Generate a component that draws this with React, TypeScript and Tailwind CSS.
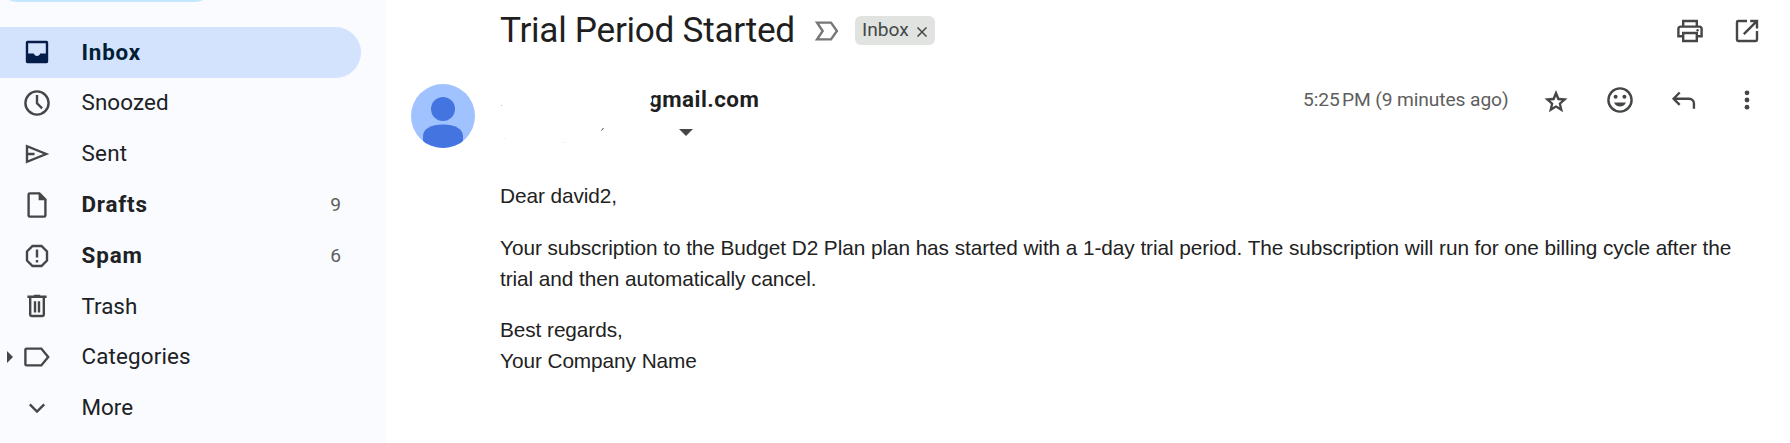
import React from "react";

type IconProps = { children: React.ReactNode; className?: string };

function Icon({ children, className = "text-[#444746]" }: IconProps) {
  return (
    <svg viewBox="0 0 20 20" fill="none" stroke="currentColor" strokeWidth="1.5" className={`block size-8 shrink-0 ${className}`}>
      {children}
    </svg>
  );
}

const icons: Record<string, React.ReactNode> = {
  Inbox: (
    <path
      fill="currentColor"
      stroke="none"
      fillRule="evenodd"
      d="M4 3h12a1 1 0 0 1 1 1v12a1 1 0 0 1-1 1H4a1 1 0 0 1-1-1V4a1 1 0 0 1 1-1zM4.500 4.500V11H8c.3.900 1 1.500 2 1.500s1.700-.600 2-1.500h3.500V4.500z"
    />
  ),
  Snoozed: (
    <>
      <circle cx="10" cy="10" r="7.250" />
      <path d="M10 5v5.200l3.200 3.200" />
    </>
  ),
  Sent: <path d="M3.750 5.150v9.700L15.700 10zM3.750 10H8.500" />,
  Drafts: (
    <>
      <path d="M5.500 2.750h6L15.250 6.500v10a.75.75 0 0 1-.75.75h-9a.75.75 0 0 1-.75-.75v-13a.75.75 0 0 1 .75-.75z" />
      <path d="M11 2v5h5z" fill="currentColor" stroke="none" />
    </>
  ),
  Spam: (
    <>
      <path d="M7.200 3.750h5.600l3.450 3.450v5.600l-3.450 3.450H7.200L3.750 12.800V7.200z" />
      <path d="M10 6v5M10 12.500V14" />
    </>
  ),
  Trash: (
    <path d="M4 4.250h12M8 3.750h4M5.750 4.500v11a.75.75 0 0 0 .75.75h7a.75.75 0 0 0 .75-.75v-11M8.750 7v7M11.250 7v7" />
  ),
  Categories: <path d="M3.500 4.750h9.200L17 10l-4.300 5.250H3.500a.75.75 0 0 1-.75-.75v-9a.75.75 0 0 1 .75-.75z" />,
  More: <path d="M5.500 7.750 10 12.200l4.500-4.450" />,
};

type Item = { name: string; count?: number; strong?: boolean; tracking: string };

const items: Item[] = [
  { name: "Inbox", strong: true, tracking: "tracking-[0.8px]" },
  { name: "Snoozed", tracking: "tracking-[0.1px]" },
  { name: "Sent", tracking: "tracking-[0.25px]" },
  { name: "Drafts", count: 9, strong: true, tracking: "tracking-[0.8px]" },
  { name: "Spam", count: 6, strong: true, tracking: "tracking-[0.9px]" },
  { name: "Trash", tracking: "tracking-normal" },
  { name: "Categories", tracking: "tracking-[0.15px]" },
  { name: "More", tracking: "tracking-normal" },
];

function Sidebar() {
  return (
    <aside className="flex w-[386px] shrink-0 flex-col overflow-hidden bg-[#f9fbff]">
      <div className="-ml-[7px] h-[2px] w-[226px] shrink-0 overflow-hidden">
        <div className="-mt-[88px] h-[90px] rounded-[25px] bg-[#c2e7ff]" />
      </div>
      <nav className="mt-[25px] flex flex-col">
        {items.map((item) => {
          const active = item.name === "Inbox";
          return (
            <a
              key={item.name}
              className={`flex h-[50.800px] w-[361px] shrink-0 items-center pr-[20px] ${active ? "rounded-r-full bg-[#d3e3fd] text-[#001d35]" : "text-[#202124]"}`}
            >
              <span className="flex w-[21px] justify-center">
                {item.name === "Categories" && (
                  <svg viewBox="0 0 6 12" className="ml-[-1px] h-3 w-1.5 fill-[#444746]">
                    <path d="M0 0v12l6-6z" />
                  </svg>
                )}
              </span>
              <Icon className={active ? "text-[#041e49]" : "text-[#444746]"}>{icons[item.name]}</Icon>
              <span className={`ml-[28.500px] flex-1 pb-px text-[22.400px] leading-none ${item.strong ? "font-bold" : ""} ${item.tracking}`}>{item.name}</span>
              {item.count && <span className="text-[19.200px] leading-none text-[#5e5e5e]">{item.count}</span>}
            </a>
          );
        })}
      </nav>
    </aside>
  );
}

function Header() {
  return (
    <div className="flex h-[61px] items-center">
      <h1 className="w-[311px] pt-px text-[35.200px] leading-none tracking-[-0.29px] whitespace-nowrap text-[#1f1f1f]">Trial Period Started</h1>
      <Icon className="text-[#747775]">
        <path d="M3.800 4.750h8.700L16.200 10l-3.700 5.250H3.800L7.300 10z" />
      </Icon>
      <span className="ml-3 flex h-[29px] w-20 items-center rounded-md bg-[#e1e3e1] pl-[7px] text-[19.200px] leading-none text-[#444746]">
        <span className="w-[55px] pb-0.5">Inbox</span>
        <svg viewBox="0 0 10 10" className="mt-[3px] size-2.5 stroke-[#444746]" fill="none" strokeWidth="1.500">
          <path d="m.5.5 9 9M9.500.5l-9 9" />
        </svg>
      </span>
      <div className="ml-auto flex gap-[25px]">
        <Icon>
          <path d="M5.750 7V3.750h8.500V7M5.500 13.250H2.750v-4.500c0-.8.700-1.500 1.500-1.500h11.500c.8 0 1.500.7 1.500 1.500v4.500H14.500M5.750 11.250h8.500v5h-8.500z" />
          <circle cx="14.750" cy="9.500" r=".75" fill="currentColor" stroke="none" />
        </Icon>
        <Icon>
          <path d="M10 3.750H4.500a.75.75 0 0 0-.75.75v11c0 .4.350.75.75.75h11c.4 0 .75-.350.75-.75V10M12 3.750h4.250V8.500M16 4l-8 8" />
        </Icon>
      </div>
    </div>
  );
}

function Sender() {
  return (
    <div className="flex h-[87px] items-start pt-[23px]">
      <svg viewBox="0 0 64 64" className="size-16 shrink-0">
        <clipPath id="avatar">
          <circle cx="32" cy="32" r="32" />
        </clipPath>
        <g clipPath="url(#avatar)">
          <path fill="#a0c2ff" d="M0 0h64v64H0z" />
          <circle cx="32" cy="25" r="12" fill="#4374e0" />
          <path fill="#4374e0" d="M12 64V52c0-7 8-11.500 20-11.500S52 45 52 52v12z" />
        </g>
      </svg>
      <svg viewBox="0 0 174 64" className="h-16 w-[174px] shrink-0" fill="none">
        <path d="m126.500 46.500 2-2.500" stroke="#444746" strokeWidth="1" />
        <path d="M26 21.500h1" stroke="#bbbbbb" />
        <path d="M29 54.500h1.500M88 58.500h2.500" stroke="#efefef" />
      </svg>
      <div className="flex flex-col">
        <span className="relative -mt-px text-[22.400px] leading-8 font-bold tracking-[0.45px] text-[#1f1f1f]">
          gmail.com
          <span className="absolute top-[13px] -left-px h-2 w-[4px] rounded-r-full bg-white" />
        </span>
        <svg viewBox="0 0 14 7" className="mt-3.5 ml-[29.500px] h-[7px] w-3.5 fill-[#444746]">
          <path d="M0 0h14L7 7z" />
        </svg>
      </div>
      <div className="ml-auto flex h-8 items-center">
        <span className="mr-[31.500px] text-[19.200px] tracking-[-0.100px] whitespace-nowrap text-[#5e5e5e]">{"5:25\u202fPM (9 minutes ago)"}</span>
        <div className="flex">
          <Icon className="mr-8 text-[#444746]">
            <path
              fill="currentColor"
              stroke="none"
              fillRule="evenodd"
              d="M7.790 14.600 10 13.250l2.210 1.350-.58-2.520 1.940-1.690-2.560-.23L10 7.800 8.990 10.160l-2.560.23 1.940 1.690zM5.600 17.600l1.200-5.100-4-3.500 5.200-.45 2-4.850 2 4.850 5.200.45-4 3.500 1.200 5.100-4.400-2.700z"
            />
          </Icon>
          <Icon className="mr-8 text-[#444746]">
            <circle cx="10" cy="10" r="7.250" />
            <circle cx="7.250" cy="8" r="1.250" fill="currentColor" stroke="none" />
            <circle cx="12.750" cy="8" r="1.250" fill="currentColor" stroke="none" />
            <path d="M6.300 11.500h7.400c-.6 1.500-2 2.500-3.700 2.500s-3.100-1-3.700-2.500z" fill="currentColor" stroke="none" />
          </Icon>
          <Icon className="mr-[31px] text-[#444746]">
            <path d="M7.300 5.300 3.500 9.200l3.800 3.900M3.700 9.200h9.500c1.700 0 3 1.300 3 3v3.300" />
          </Icon>
          <Icon>
            <g fill="currentColor" stroke="none">
              <circle cx="10" cy="5.500" r="1.500" />
              <circle cx="10" cy="10" r="1.500" />
              <circle cx="10" cy="14.500" r="1.500" />
            </g>
          </Icon>
        </div>
      </div>
    </div>
  );
}

export default function App() {
  return (
    <div className="flex h-[443px] w-[1790px] overflow-hidden bg-white font-['Roboto','Liberation_Sans',sans-serif]">
      <Sidebar />
      <main className="flex min-w-0 flex-1 flex-col">
        <div className="pr-[27px] pl-[114px]">
          <Header />
        </div>
        <div className="pr-[27px] pl-[25px]">
          <Sender />
        </div>
        <article className="mt-8 space-y-[20.300px] pr-10 pl-[114px] font-['Liberation_Sans',Arial,sans-serif] text-[20.800px] leading-[31.200px] tracking-[-0.073px] text-[#222222]">
          <p>Dear david2,</p>
          <p>
            Your subscription to the Budget D2 Plan plan has started with a 1-day trial period. The subscription will run for one billing cycle after the
            <br />
            trial and then automatically cancel.
          </p>
          <p>
            Best regards,
            <br />
            Your Company Name
          </p>
        </article>
      </main>
    </div>
  );
}
